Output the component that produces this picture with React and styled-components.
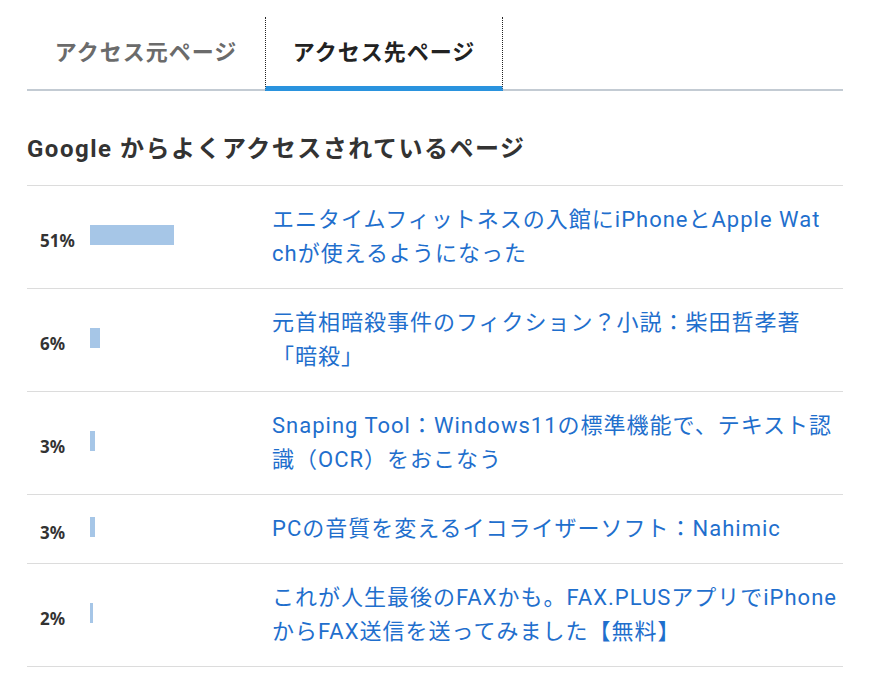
import React from "react";
import styled, { createGlobalStyle } from "styled-components";

const GlobalStyle = createGlobalStyle`
  html, body {
    margin: 0;
    padding: 0;
    background: #fff;
  }
  body {
    font-family: Roboto, "Noto Sans CJK JP", sans-serif;
    color: #333;
  }
`;

const Page = styled.div`
  padding: 17px 37px 0 27px;
`;

const Tabs = styled.div`
  display: flex;
  border-bottom: 2px solid #c3cbd3;
`;

const Tab = styled.div`
  box-sizing: border-box;
  width: 238px;
  height: 74px;
  margin-bottom: -2px;
  display: flex;
  align-items: center;
  justify-content: center;
  padding-bottom: 3px;
  font-size: 22px;
  letter-spacing: 1px;
  font-weight: 700;
  color: ${(p) => (p.$active ? "#222" : "#6b6b6b")};
  border-left: 1px dotted ${(p) => (p.$active ? "#222" : "transparent")};
  border-right: 1px dotted ${(p) => (p.$active ? "#222" : "transparent")};
  border-bottom: 5px solid ${(p) => (p.$active ? "#2a93de" : "transparent")};
`;

const Heading = styled.h2`
  margin: 41px 0 19px;
  font-size: 24px;
  letter-spacing: 1.5px;
  line-height: 34px;
  font-weight: 700;
  color: #333;
`;

const List = styled.div`
  border-top: 1px solid #dcdcdc;
`;

const Row = styled.div`
  display: grid;
  grid-template-columns: 63px 182px 1fr;
  align-items: center;
  padding: 17px 4px 17px 0;
  border-bottom: 1px solid #dcdcdc;
`;

const Pct = styled.div`
  padding: 6px 0 0 13px;
  font-family: "Noto Sans", sans-serif;
  font-size: 17px;
  font-weight: 700;
  color: #333;
`;

const BarCell = styled.div`
  display: flex;
  align-items: center;
  margin-top: -4px;
`;

const Bar = styled.div`
  height: 20px;
  background: #a6c6e7;
`;

const Title = styled.a`
  font-size: 22px;
  letter-spacing: 1px;
  line-height: 34px;
  color: #1f6fcd;
  text-decoration: none;
  word-break: break-all;
`;

const pages = [
  { pct: 51, lines: ["エニタイムフィットネスの入館にiPhoneとApple Wat", "chが使えるようになった"] },
  { pct: 6, lines: ["元首相暗殺事件のフィクション？小説：柴田哲孝著", "「暗殺」"] },
  { pct: 3, lines: ["Snaping Tool：Windows11の標準機能で、テキスト認", "識（OCR）をおこなう"] },
  { pct: 3, lines: ["PCの音質を変えるイコライザーソフト：Nahimic"] },
  { pct: 2, lines: ["これが人生最後のFAXかも。FAX.PLUSアプリでiPhone", "からFAX送信を送ってみました【無料】"] },
];

export default function App() {
  return (
    <Page>
      <GlobalStyle />
      <Tabs>
        <Tab>アクセス元ページ</Tab>
        <Tab $active>アクセス先ページ</Tab>
      </Tabs>
      <Heading>Google からよくアクセスされているページ</Heading>
      <List>
        {pages.map((p, i) => (
          <Row key={i}>
            <Pct>{p.pct}%</Pct>
            <BarCell>
              <Bar style={{ width: Math.max(3, Math.round(p.pct * 1.65)) }} />
            </BarCell>
            <Title href="#">
              {p.lines.map((line, j) => (
                <React.Fragment key={j}>
                  {j > 0 && <br />}
                  {line}
                </React.Fragment>
              ))}
            </Title>
          </Row>
        ))}
      </List>
    </Page>
  );
}
